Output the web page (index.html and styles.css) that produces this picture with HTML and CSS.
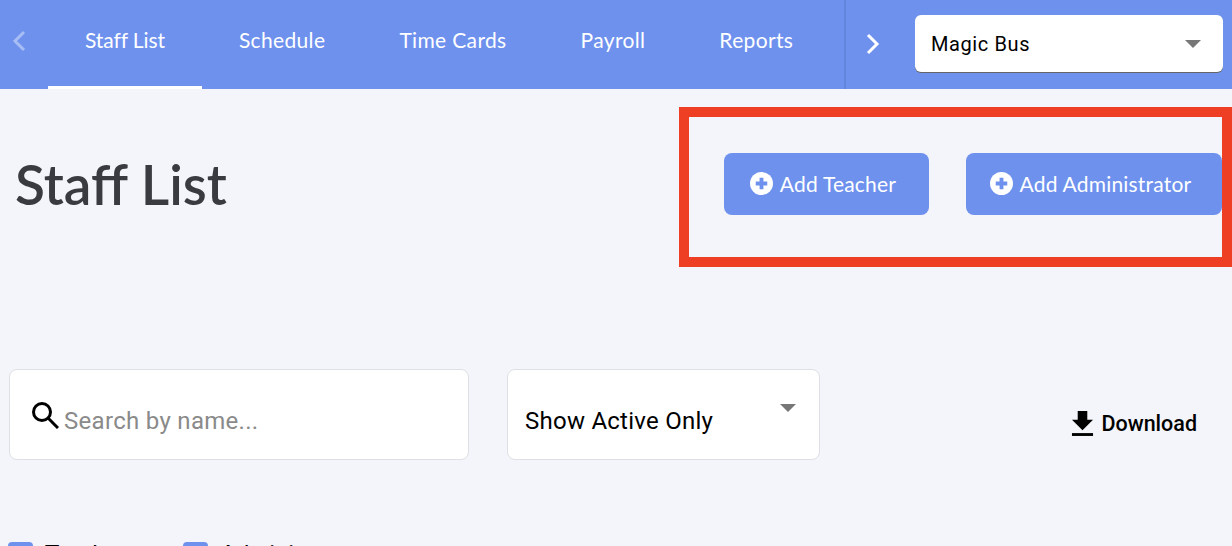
FILE: index.html
```html
<!DOCTYPE html>
<html lang="en">
<head>
  <meta charset="UTF-8">
  <title>Staff List</title>
  <link rel="stylesheet" href="styles.css">
</head>
<body>
  <!-- Top nav -->
  <nav class="navbar">
    <div class="tabs">
      <svg class="chevron chevron-off" viewBox="0 0 16 24"><path d="M13 3 L4 12 L13 21"/></svg>
      <a class="tab tab-active">Staff List</a>
      <a class="tab">Schedule</a>
      <a class="tab">Time Cards</a>
      <a class="tab">Payroll</a>
      <a class="tab">Reports</a>
    </div>
    <div class="nav-right">
      <svg class="chevron" viewBox="0 0 16 24"><path d="M3 3 L12 12 L3 21"/></svg>
      <div class="school-select">
        <span>Magic Bus</span>
        <span class="arrow"></span>
      </div>
    </div>
  </nav>

  <main class="content">
    <div class="page-head">
      <h1>Staff List</h1>
      <div class="actions">
        <button class="add-btn">
          <svg class="plus" viewBox="0 0 24 24"><circle cx="12" cy="12" r="12"/><path d="M12 6 V18 M6 12 H18"/></svg>
          Add Teacher
        </button>
        <button class="add-btn">
          <svg class="plus" viewBox="0 0 24 24"><circle cx="12" cy="12" r="12"/><path d="M12 6 V18 M6 12 H18"/></svg>
          Add Administrator
        </button>
      </div>
    </div>

    <div class="filters">
      <div class="search-box">
        <svg class="search-icon" viewBox="0 0 28 28"><circle cx="11" cy="11" r="8.5"/><path d="M17 17 L27 27"/></svg>
        <span>Search by name...</span>
      </div>
      <div class="status-select">
        <span>Show Active Only</span>
        <span class="arrow"></span>
      </div>
      <a class="download">
        <svg class="download-icon" viewBox="0 0 24 28"><path d="M7 1 H17 V10 H23 L12 21 L1 10 H7 Z"/><path d="M1 24 H23 V27 H1 Z"/></svg>
        Download
      </a>
    </div>

    <div class="legend">
      <span class="legend-item"><span class="box"></span>Teachers</span>
      <span class="legend-item"><span class="box"></span>Administrators</span>
    </div>
  </main>

  <!-- Red highlight drawn over the screenshot -->
  <div class="highlight"></div>
</body>
</html>
```

FILE: styles.css
```css
html, body {
  margin: 0;
  padding: 0;
  height: 546px;
  overflow: hidden;
}
body {
  position: relative;
  background-color: #f4f5fa;
  font-family: Roboto, "Liberation Sans", sans-serif;
  color: #000;
}

/* Nav */
.navbar {
  display: flex;
  justify-content: space-between;
  height: 89px;
  background-color: #6e91ee;
}
.tabs {
  display: flex;
  align-items: stretch;
}
.tab {
  display: flex;
  align-items: center;
  height: 79px;
  padding: 0 37px 7px;
  font-family: Lato, sans-serif;
  font-size: 21px;
  letter-spacing: 0.35px;
  color: #fff;
  border-bottom: 3px solid transparent;
}
.tab-active {
  letter-spacing: -0.1px;
  border-bottom-color: #fff;
}
.chevron {
  width: 16px;
  height: 24px;
  fill: none;
  stroke: #fff;
  stroke-width: 3;
}
.chevron-off {
  align-self: center;
  margin: 0 21px 8px 11px;
  opacity: 0.4;
}
.nav-right {
  display: flex;
  align-items: center;
  width: 388px;
  box-sizing: border-box;
  padding: 0 9px 2px 19px;
  border-left: 2px solid #6485dc;
}
.school-select {
  display: flex;
  justify-content: space-between;
  align-items: center;
  flex: 1;
  height: 57px;
  margin-left: 34px;
  padding: 0 22px 0 16px;
  background-color: #fff;
  border-radius: 6px;
  box-shadow: 0 1px 0 #666;
  font-size: 20px;
  letter-spacing: 0.6px;
}
.arrow {
  width: 0;
  height: 0;
  border-left: 8px solid transparent;
  border-right: 8px solid transparent;
  border-top: 8px solid #777;
}

/* Content */
.content {
  padding: 0 10px 0 9px;
}
.page-head {
  display: flex;
  justify-content: space-between;
  align-items: center;
  height: 62px;
  margin-top: 64px;
  padding-left: 6px;
}
h1 {
  margin: 0;
  font-family: Lato, sans-serif;
  font-size: 55px;
  font-weight: 600;
  color: #3a3b40;
}
.actions {
  display: flex;
  gap: 37px;
}
.add-btn {
  display: flex;
  align-items: center;
  justify-content: center;
  gap: 7px;
  height: 62px;
  width: 205px;
  padding: 0 7px 2px 0;
  border: none;
  border-radius: 8px;
  background-color: #6e91ee;
  color: #fff;
  font-family: Lato, sans-serif;
  font-size: 21px;
  letter-spacing: 0.2px;
}
.add-btn:last-child {
  width: 256px;
}
.plus {
  width: 23px;
  height: 23px;
  flex-shrink: 0;
}
.plus circle {
  fill: #fff;
}
.plus path {
  fill: none;
  stroke: #6e91ee;
  stroke-width: 4;
}

.filters {
  display: flex;
  align-items: center;
  margin-top: 154px;
}
.search-box, .status-select {
  display: flex;
  height: 91px;
  box-sizing: border-box;
  background-color: #fff;
  border: 1px solid #dfe0e3;
  border-radius: 8px;
  font-size: 24px;
}
.search-box {
  align-items: center;
  gap: 5px;
  width: 460px;
  padding: 12px 0 0 21px;
  color: #8a8a8a;
  letter-spacing: 0.3px;
}
.search-icon {
  width: 28px;
  height: 28px;
  margin-bottom: 12px;
  fill: none;
  stroke: #000;
  stroke-width: 3;
}
.status-select {
  justify-content: space-between;
  align-items: center;
  width: 313px;
  margin-left: 38px;
  padding: 12px 23px 0 17px;
  letter-spacing: 0.25px;
}
.status-select .arrow {
  margin-bottom: 26px;
}
.download {
  display: flex;
  align-items: center;
  gap: 7px;
  margin-left: auto;
  margin-right: 25px;
  padding-top: 18px;
  font-size: 21.5px;
  font-weight: 500;
}
.download-icon {
  width: 23px;
  height: 27px;
}

.legend {
  display: flex;
  margin: 82px 0 0 -1px;
  font-family: Lato, sans-serif;
  font-size: 24px;
  line-height: 22px;
}
.legend-item {
  display: flex;
  gap: 12px;
  width: 175px;
  white-space: nowrap;
}
.box {
  flex-shrink: 0;
  width: 25px;
  height: 25px;
  border-radius: 4px;
  background-color: #6e91ee;
}

/* Annotation box */
.highlight {
  position: absolute;
  left: 679px;
  top: 107px;
  width: 533px;
  height: 140px;
  border: 10px solid #ee3f24;
}
```
